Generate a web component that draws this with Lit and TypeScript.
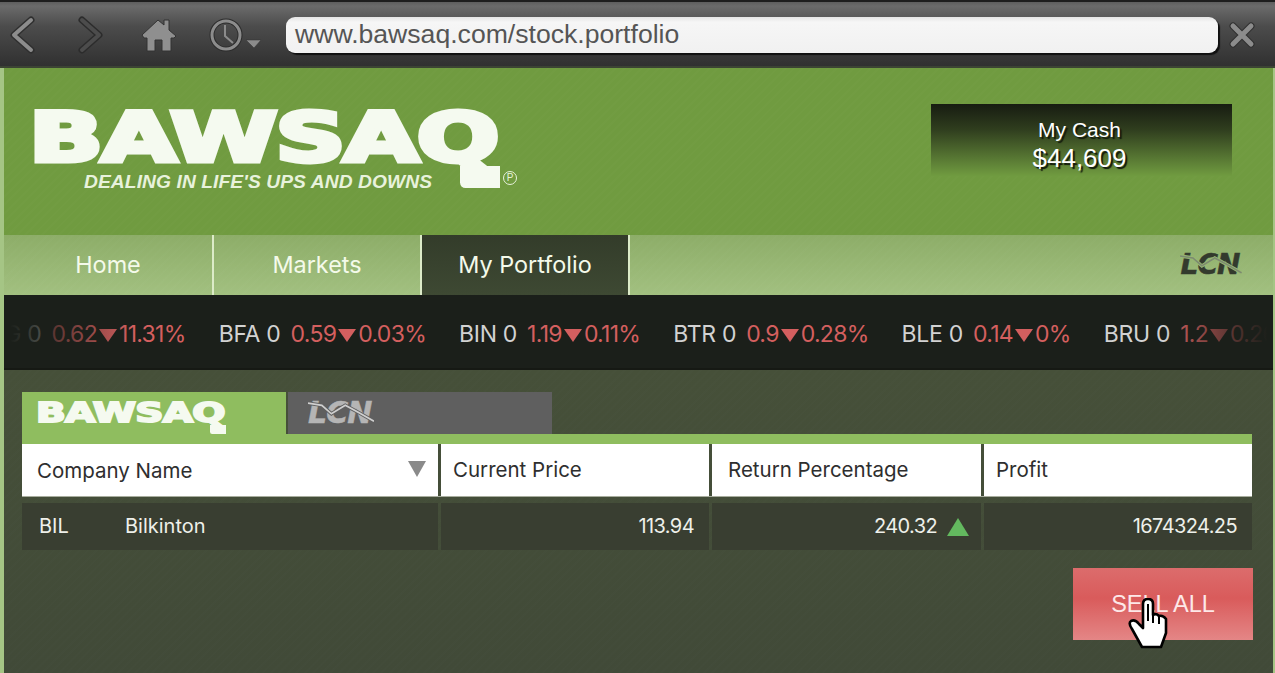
import { LitElement, html, css, svg } from "lit";
import { customElement } from "lit/decorators.js";

const TICKER = [
  { name: "BEG", open: "0", price: "0.62", pct: "11.31%" },
  { name: "BFA", open: "0", price: "0.59", pct: "0.03%" },
  { name: "BIN", open: "0", price: "1.19", pct: "0.11%" },
  { name: "BTR", open: "0", price: "0.9", pct: "0.28%" },
  { name: "BLE", open: "0", price: "0.14", pct: "0%" },
  { name: "BRU", open: "0", price: "1.2", pct: "0.26%" },
];

const LCN_POINTS = "0,3 13,5 22,13 35,5 48,12 62,20";
const lcnLine = svg`
  <polyline class="halo" points=${LCN_POINTS} fill="none" />
  <polyline class="line" points=${LCN_POINTS} fill="none" />
`;

@customElement("app-root")
export class AppRoot extends LitElement {
  static styles = css`
    :host {
      display: block;
      height: 673px;
      overflow: hidden;
      position: relative;
      font-family: "Liberation Sans", Arial, sans-serif;
      background: #a5c585;
    }
    .toolbar {
      height: 68px;
      box-sizing: border-box;
      display: flex;
      align-items: center;
      border-top: 2px solid #1e1e1e;
      background: linear-gradient(#5e5e5e 0, #6b6b6b 4px, #4c4c4c 24px, #3a3a3a 50px, #2f2f2f 66px);
      box-shadow: inset 0 -2px 0 #3c4434;
      padding: 0 20px 0 7px;
    }
    .toolbar svg {
      display: block;
      flex: none;
    }
    .back { margin-right: 38px; }
    .forward { margin-right: 36px; }
    .home { margin-right: 32px; }
    .clock { margin-right: 25px; }
    .address {
      flex: 1;
      height: 36px;
      box-sizing: border-box;
      border-radius: 9px;
      background: linear-gradient(#e4e4e4, #f6f6f6 5px, #f1f1f1);
      box-shadow: 2px 2px 1px #111;
      color: #555;
      font-size: 26.6px;
      line-height: 35px;
      padding-left: 9px;
      white-space: nowrap;
    }
    .close { margin-left: 11px; }
    .page {
      margin: 0 2px 0 4px;
      display: flex;
      flex-direction: column;
      height: 605px;
    }
    .masthead {
      height: 167px;
      box-sizing: border-box;
      display: flex;
      justify-content: space-between;
      padding: 36px 41px 0 30px;
      background:
        repeating-linear-gradient(135deg, rgba(255, 255, 255, 0.012) 0 2px, transparent 2px 6px),
        #709b40;
    }
    .logo {
      position: relative;
      width: 490px;
      height: 88px;
      color: #f5faf0;
      font-size: 68px;
    }
    .mark {
      position: relative;
      display: block;
      width: 7em;
      height: 1.2em;
    }
    .wordmark {
      display: block;
      margin: 0.05em 0 0 -0.07em;
      font-family: "DejaVu Sans", "Liberation Sans", sans-serif;
      font-weight: 700;
      line-height: 0.9;
      white-space: nowrap;
      transform-origin: 0 0;
      transform: scaleX(1.43);
      letter-spacing: -0.02em;
      -webkit-text-stroke: 0.07em currentColor;
    }
    .q-tail {
      position: absolute;
      left: 6.26em;
      top: 0.86em;
      width: 0.59em;
      height: 0.33em;
      background: currentColor;
      border-radius: 0 0 0 0.08em;
    }
    .tagline {
      position: absolute;
      left: 50px;
      top: 67px;
      font-size: 19.2px;
      font-weight: 700;
      font-style: italic;
      letter-spacing: 0.1px;
      white-space: nowrap;
      color: #e8f2dc;
    }
    .reg {
      position: absolute;
      left: 469px;
      top: 67px;
      width: 12px;
      height: 12px;
      border: 1px solid #e8f2dc;
      border-radius: 50%;
      font-size: 10px;
      line-height: 12px;
      text-align: center;
      color: #e8f2dc;
    }
    .cash {
      width: 301px;
      height: 72px;
      box-sizing: border-box;
      padding: 14px 4px 0 0;
      text-align: center;
      color: #fff;
      background: linear-gradient(#171c11, #2f3d1e 35%, #709b40);
      text-shadow: 2px 2px 1px #12180b;
    }
    .cash-label { font-size: 21px; line-height: 24px; }
    .cash-value { font-size: 26px; line-height: 33px; }
    .nav {
      height: 60px;
      display: flex;
      align-items: stretch;
      background:
        repeating-linear-gradient(135deg, rgba(255, 255, 255, 0.012) 0 2px, transparent 2px 6px),
        linear-gradient(#8dad68, #a2c080);
    }
    .nav a {
      width: 208px;
      box-sizing: border-box;
      text-align: center;
      font-family: Inter, "Liberation Sans", sans-serif;
      font-size: 23.4px;
      line-height: 60px;
      color: #f4faea;
      border-right: 2px solid #dcebc8;
    }
    .nav a:first-child { width: 210px; }
    .nav a.active { background: linear-gradient(#333c2a, #3e4933); }
    .nav .lcn {
      margin: 18px 31px 0 auto;
      color: #333a2d;
      --halo: #97b773;
      --line: #7d8a70;
    }
    .lcn {
      position: relative;
      display: block;
      width: 2.2em;
      height: 0.85em;
      font-family: "DejaVu Sans", "Liberation Sans", sans-serif;
      font-size: 28px;
      line-height: 0.85em;
      font-weight: 700;
      font-style: italic;
      letter-spacing: -0.03em;
      -webkit-text-stroke: 0.5px currentColor;
    }
    .lcn svg {
      position: absolute;
      left: 0;
      top: 0;
      width: 100%;
      height: 100%;
    }
    .lcn .halo { stroke: var(--halo); stroke-width: 3.4; }
    .lcn .line { stroke: var(--line); stroke-width: 1.6; }
    .ticker {
      position: relative;
      height: 75px;
      overflow: hidden;
      box-sizing: border-box;
      display: flex;
      align-items: center;
      gap: 33px;
      padding: 4px 0 0;
      background: #1b1f1a;
      border-bottom: 2px solid #161914;
      font-family: Inter, "Liberation Sans", sans-serif;
      font-size: 23px;
      letter-spacing: -0.3px;
      white-space: nowrap;
    }
    .ticker::before,
    .ticker::after {
      content: "";
      position: absolute;
      top: 0;
      bottom: 0;
      z-index: 1;
    }
    .ticker::before {
      left: 0;
      width: 130px;
      background: linear-gradient(90deg, #1b1f1a 5%, rgba(27, 31, 26, 0));
    }
    .ticker::after {
      right: 0;
      width: 110px;
      background: linear-gradient(270deg, #1b1f1a 5%, rgba(27, 31, 26, 0));
    }
    .tick {
      flex: none;
      display: flex;
      align-items: center;
      color: #d2d2d2;
    }
    .tick:first-child { margin-left: -28px; }
    .tick .down {
      color: #d45f5f;
      letter-spacing: -0.7px;
    }
    .tick .price { margin-left: 10px; }
    .arrow {
      width: 0;
      height: 0;
      margin: 3px 2px 0 2px;
      border-left: 9px solid transparent;
      border-right: 9px solid transparent;
      border-top: 13px solid #d45f5f;
    }
    .content {
      flex: 1;
      position: relative;
      box-sizing: border-box;
      padding: 22px 21px 0 18px;
      background:
        repeating-linear-gradient(135deg, rgba(255, 255, 255, 0.008) 0 2px, transparent 2px 6px),
        linear-gradient(#465039, #414a38);
    }
    .tabs {
      display: flex;
      gap: 2px;
      height: 42px;
    }
    .tab {
      width: 264px;
      box-sizing: border-box;
    }
    .tab.on {
      padding: 8px 0 0 16px;
      background: #8fbd5f;
      color: #f5faf0;
      font-size: 27.4px;
    }
    .tab.off {
      background: #5f5f5f;
      padding: 8px 0 0 20px;
      color: #b5b5b5;
    }
    .tab.off .lcn {
      font-size: 30px;
      --halo: #5f5f5f;
      --line: #cfcfcf;
    }
    .strip {
      height: 10px;
      background: #8fbd5f;
    }
    .head,
    .row {
      display: grid;
      grid-template-columns: 416px 268px 269px 268px;
      column-gap: 3px;
    }
    .head {
      height: 53px;
      box-sizing: border-box;
      border-bottom: 1px solid #a8ad9e;
    }
    .head div {
      background: #fff;
      color: #2e2e2e;
      font-family: Inter, "Liberation Sans", sans-serif;
      font-size: 20.5px;
      line-height: 49px;
      padding: 0 0 2px 12px;
      display: flex;
      justify-content: space-between;
      align-items: center;
    }
    .head div:first-child { padding: 1px 12px 1px 15px; }
    .head div:nth-child(3) { padding-left: 16px; }
    .sort {
      width: 0;
      height: 0;
      margin-top: -2px;
      border-left: 9px solid transparent;
      border-right: 9px solid transparent;
      border-top: 16px solid #8a8a8a;
    }
    .row {
      margin-top: 6px;
      height: 47px;
    }
    .row div {
      background: #393e31;
      color: #eef0ea;
      font-family: Inter, "Liberation Sans", sans-serif;
      font-size: 20px;
      letter-spacing: -0.6px;
      line-height: 47px;
      display: flex;
      justify-content: flex-end;
      align-items: center;
      padding-right: 15px;
    }
    .row div:first-child {
      justify-content: flex-start;
      padding-left: 17px;
      letter-spacing: 0;
    }
    .row .sym { width: 86px; }
    .row .up {
      width: 0;
      height: 0;
      margin-left: 10px;
      margin-right: -3px;
      border-left: 11px solid transparent;
      border-right: 11px solid transparent;
      border-bottom: 18px solid #63b95f;
    }
    .actions {
      display: flex;
      justify-content: flex-end;
      margin: 18px -1px 0 0;
    }
    .sell {
      width: 180px;
      height: 72px;
      border: 0;
      padding: 0;
      color: #fde8e8;
      font-family: inherit;
      font-size: 23.5px;
      background: linear-gradient(#dc6c6c, #d95b5b 42%, #e48686 100%);
    }
    .hand {
      position: absolute;
      left: 1123px;
      top: 228px;
    }
  `;

  logo() {
    return html`<span class="mark"><span class="wordmark">BAWSAQ</span><span class="q-tail"></span></span>`;
  }

  lcn() {
    return html`<span class="lcn"
      >LCN
      <svg viewBox="0 0 62 24" preserveAspectRatio="none">${lcnLine}</svg></span
    >`;
  }

  render() {
    return html`
      <div class="toolbar">
        <svg class="back" width="30" height="40" viewBox="0 0 30 40">
          <polyline points="24,5 7,20 24,35" fill="none" stroke="#2f2f2f" stroke-width="7" stroke-linecap="round" stroke-linejoin="round" />
          <polyline points="24,5 7,20 24,35" fill="none" stroke="#8c8c8c" stroke-width="4" stroke-linecap="round" stroke-linejoin="round" />
        </svg>
        <svg class="forward" width="30" height="40" viewBox="0 0 30 40">
          <polyline points="7,5 24,20 7,35" fill="none" stroke="#2c2c2c" stroke-width="7" stroke-linecap="round" stroke-linejoin="round" />
          <polyline points="7,5 24,20 7,35" fill="none" stroke="#4c4c4c" stroke-width="4" stroke-linecap="round" stroke-linejoin="round" />
        </svg>
        <svg class="home" width="36" height="36" viewBox="0 0 36 36">
          <path
            d="M1 18 L17 3 L23 8 V3 H28 V13 L35 19 L33 21 H30 V34 H21 V23 H14 V34 H6 V21 H3 Z"
            fill="#8f8f8f"
            stroke="#333"
            stroke-width="1"
          />
        </svg>
        <svg class="clock" width="52" height="36" viewBox="0 0 52 36">
          <circle cx="17" cy="18" r="14" fill="none" stroke="#2c2c2c" stroke-width="5" />
          <circle cx="17" cy="18" r="14" fill="none" stroke="#8c8c8c" stroke-width="3" />
          <polyline points="16,8 16,19 24,26" fill="none" stroke="#8c8c8c" stroke-width="2" />
          <polygon points="37,23 52,23 45,31" fill="#8c8c8c" stroke="#333" stroke-width="0.5" />
        </svg>
        <div class="address">www.bawsaq.com/stock.portfolio</div>
        <svg class="close" width="26" height="26" viewBox="0 0 26 26">
          <path d="M4 4 L22 22 M22 4 L4 22" stroke="#2f2f2f" stroke-width="7" stroke-linecap="round" />
          <path d="M4 4 L22 22 M22 4 L4 22" stroke="#8c8c8c" stroke-width="5" stroke-linecap="round" />
        </svg>
      </div>
      <div class="page">
        <header class="masthead">
          <div class="logo">
            ${this.logo()}
            <span class="tagline">DEALING IN LIFE'S UPS AND DOWNS</span>
            <span class="reg">P</span>
          </div>
          <div class="cash">
            <div class="cash-label">My Cash</div>
            <div class="cash-value">$44,609</div>
          </div>
        </header>
        <nav class="nav">
          <a>Home</a>
          <a>Markets</a>
          <a class="active">My Portfolio</a>
          ${this.lcn()}
        </nav>
        <div class="ticker">
          ${TICKER.map(
            (t) => html`<div class="tick">
              ${t.name} ${t.open}
              <span class="down price">${t.price}</span><span class="arrow"></span
              ><span class="down">${t.pct}</span>
            </div>`
          )}
        </div>
        <main class="content">
          <div class="tabs">
            <div class="tab on">${this.logo()}</div>
            <div class="tab off">${this.lcn()}</div>
          </div>
          <div class="strip"></div>
          <div class="head">
            <div>Company Name<span class="sort"></span></div>
            <div>Current Price</div>
            <div>Return Percentage</div>
            <div>Profit</div>
          </div>
          <div class="row">
            <div><span class="sym">BIL</span>Bilkinton</div>
            <div>113.94</div>
            <div>240.32<span class="up"></span></div>
            <div>1674324.25</div>
          </div>
          <div class="actions"><button class="sell">SELL ALL</button></div>
          <svg class="hand" width="41" height="52" viewBox="-2 -1 41 52">
            <path
              d="M14 5 Q14 0 19 0 Q24 0 24 5 L24 16 Q27 14 30 17 Q34 16 37 20 L37 34 L32 48 L13 48 L3 30 Q-1 24 2 22 Q6 20 10 25 L14 29 Z"
              fill="#fff"
              stroke="#000"
              stroke-width="2.6"
              stroke-linejoin="round"
            />
            <path d="M19 5 V22 M24 16 V24 M30 17 V25" stroke="#000" stroke-width="2" fill="none" />
          </svg>
        </main>
      </div>
    `;
  }
}
